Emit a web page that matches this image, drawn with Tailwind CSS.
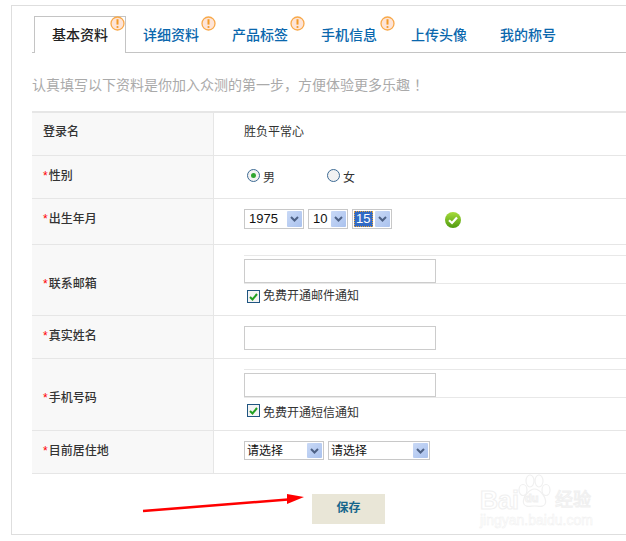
<!DOCTYPE html>
<html lang="zh-CN">
<head>
    <meta charset="UTF-8">
    <title>基本资料</title>
    <script src="https://cdn.jsdelivr.net/npm/@tailwindcss/browser@4"></script>
</head>
<body class="bg-white overflow-hidden font-['Liberation_Sans','Noto_Sans_CJK_SC',sans-serif] text-[12px] text-[#333]">
<div class="relative w-[626px] h-[541px] overflow-hidden">
    <!-- 外框 -->
    <div class="relative ml-[11px] mt-[5px] w-[640px] h-[530px] border border-[#dedede] border-r-0 pl-[20px] pt-[10px]">

        <!-- 标签 -->
        <div class="flex h-[37px] border-b border-[#c4c4c4] text-[14px] font-medium text-[#0a67ad] leading-[38px]">
            <div class="relative ml-[2px] w-[92px] h-[37px] border border-b-0 border-[#c4c4c4] bg-white pl-[17px] text-[#222] leading-[36px]">基本资料
                <svg class="absolute left-[75px] top-[-1px] w-[15px] h-[15px]" viewBox="0 0 15 15"><circle cx="7.5" cy="7.5" r="6.5" fill="#fde4d8" stroke="#f8a94a" stroke-width="1.3"/><path d="M7.5 3.2v5.4" stroke="#f39a26" stroke-width="2"/><circle cx="7.5" cy="11" r="1.1" fill="#f39a26"/></svg>
            </div>
            <div class="relative ml-[17px] w-[72px]">详细资料
                <svg class="absolute left-[58px] top-0 w-[15px] h-[15px]" viewBox="0 0 15 15"><circle cx="7.5" cy="7.5" r="6.5" fill="#fde4d8" stroke="#f8a94a" stroke-width="1.3"/><path d="M7.5 3.2v5.4" stroke="#f39a26" stroke-width="2"/><circle cx="7.5" cy="11" r="1.1" fill="#f39a26"/></svg>
            </div>
            <div class="relative ml-[17px] w-[72px]">产品标签
                <svg class="absolute left-[58px] top-0 w-[15px] h-[15px]" viewBox="0 0 15 15"><circle cx="7.5" cy="7.5" r="6.5" fill="#fde4d8" stroke="#f8a94a" stroke-width="1.3"/><path d="M7.5 3.2v5.4" stroke="#f39a26" stroke-width="2"/><circle cx="7.5" cy="11" r="1.1" fill="#f39a26"/></svg>
            </div>
            <div class="relative ml-[17px] w-[72px]">手机信息
                <svg class="absolute left-[59px] top-0 w-[15px] h-[15px]" viewBox="0 0 15 15"><circle cx="7.5" cy="7.5" r="6.5" fill="#fde4d8" stroke="#f8a94a" stroke-width="1.3"/><path d="M7.5 3.2v5.4" stroke="#f39a26" stroke-width="2"/><circle cx="7.5" cy="11" r="1.1" fill="#f39a26"/></svg>
            </div>
            <div class="ml-[18px] w-[72px]">上传头像</div>
            <div class="ml-[17px] w-[72px]">我的称号</div>
        </div>

        <p class="mt-[22px] h-[20px] text-[14px] leading-[20px] text-[#aaaaaa]">认真填写以下资料是你加入众测的第一步，方便体验更多乐趣<span class="ml-[4px]">！</span></p>

        <!-- 表单 -->
        <div class="mt-[16px] border-t-2 border-[#e6e6e6]">
            <div class="flex h-[43px] border-b border-[#e6e6e6]">
                <div class="w-[182px] border-r border-[#e6e6e6] bg-[#f8f8f8] pl-[11px] font-medium leading-[38px]">登录名</div>
                <div class="pl-[30px] leading-[38px]">胜负平常心</div>
            </div>
            <div class="flex h-[43px] border-b border-[#e6e6e6]">
                <div class="w-[182px] border-r border-[#e6e6e6] bg-[#f8f8f8] pl-[11px] font-medium leading-[40px]"><span class="text-[#f00] mr-px">*</span>性别</div>
                <div class="flex items-start pl-[33px] pt-[13px] leading-[14px]">
                    <span class="flex items-center justify-center w-[13px] h-[13px] rounded-full border border-[#3d6a94] bg-[#f2f2f2]"><span class="w-[5px] h-[5px] rounded-full bg-[#2fa52f]"></span></span>
                    <span class="ml-[3px] mt-[2px] w-[64px]">男</span>
                    <span class="w-[13px] h-[13px] rounded-full border border-[#3d6a94] bg-[#f2f2f2]"></span>
                    <span class="ml-[3px] mt-[2px]">女</span>
                </div>
            </div>
            <div class="flex h-[46px] border-b border-[#e6e6e6]">
                <div class="w-[182px] border-r border-[#e6e6e6] bg-[#f8f8f8] pl-[11px] font-medium leading-[40px]"><span class="text-[#f00] mr-px">*</span>出生年月</div>
                <div class="flex items-start pl-[30px] pt-[10px]">
                    <div class="flex justify-between w-[60px] h-[20px] border border-[#c8c8c8] p-px pl-[4px] text-[13px] leading-[16px] text-[#111]">1975
                        <span class="flex items-center justify-center w-[15px] h-[16px] rounded-[1px] bg-gradient-to-br from-[#c9d9f6] to-[#aac2ee]"><svg class="w-[9px] h-[6px]" viewBox="0 0 9 6"><path d="M1 1l3.5 3.5L8 1" fill="none" stroke="#4d6185" stroke-width="2"/></svg></span>
                    </div>
                    <div class="ml-[4px] flex justify-between w-[40px] h-[20px] border border-[#c8c8c8] p-px pl-[4px] text-[13px] leading-[16px] text-[#111]">10
                        <span class="flex items-center justify-center w-[15px] h-[16px] rounded-[1px] bg-gradient-to-br from-[#c9d9f6] to-[#aac2ee]"><svg class="w-[9px] h-[6px]" viewBox="0 0 9 6"><path d="M1 1l3.5 3.5L8 1" fill="none" stroke="#4d6185" stroke-width="2"/></svg></span>
                    </div>
                    <div class="ml-[4px] flex justify-between w-[40px] h-[20px] border border-[#c8c8c8] p-px pl-[1px] text-[13px] leading-[16px] text-white">
                        <span class="w-[19px] h-[16px] bg-[#316ac5] border border-dotted border-[#e8a33a] pl-px leading-[14px]">15</span>
                        <span class="flex items-center justify-center w-[15px] h-[16px] rounded-[1px] bg-gradient-to-br from-[#c9d9f6] to-[#aac2ee]"><svg class="w-[9px] h-[6px]" viewBox="0 0 9 6"><path d="M1 1l3.5 3.5L8 1" fill="none" stroke="#4d6185" stroke-width="2"/></svg></span>
                    </div>
                    <svg class="ml-[53px] mt-[3px] w-[16px] h-[16px]" viewBox="0 0 16 16"><defs><linearGradient id="g" x1="0" y1="0" x2="0" y2="1"><stop offset="0" stop-color="#a6dc3a"/><stop offset="1" stop-color="#4f9a10"/></linearGradient></defs><circle cx="8" cy="8" r="8" fill="url(#g)"/><path d="M4 8.2l3 2.8 5-5.6" fill="none" stroke="#fff" stroke-width="2.2"/></svg>
                </div>
            </div>
            <div class="flex h-[71px] border-b border-[#e6e6e6]">
                <div class="w-[182px] border-r border-[#e6e6e6] bg-[#f8f8f8] pl-[11px] font-medium leading-[78px]"><span class="text-[#f00] mr-px">*</span>联系邮箱</div>
                <div class="flex-1 pl-[30px]">
                    <div class="mt-[10px] border-t border-[#e8e8e8] pt-[3px]">
                        <div class="w-[192px] h-[24px] border border-[#cccccc]"></div>
                        <div class="border-t border-[#e8e8e8] flex items-start pl-[3px] pt-[6px] leading-[13px]">
                            <span class="flex items-center justify-center w-[13px] h-[13px] border border-[#1f5581] bg-[#f4f4f4]"><svg class="w-[9px] h-[8px]" viewBox="0 0 9 8"><path d="M1 4l2.5 2.5L8 1" fill="none" stroke="#20a020" stroke-width="2"/></svg></span>
                            <span class="ml-[3px]">免费开通邮件通知</span>
                        </div>
                    </div>
                </div>
            </div>
            <div class="flex h-[43px] border-b border-[#e6e6e6]">
                <div class="w-[182px] border-r border-[#e6e6e6] bg-[#f8f8f8] pl-[11px] font-medium leading-[40px]"><span class="text-[#f00] mr-px">*</span>真实姓名</div>
                <div class="pl-[30px] pt-[10px]"><div class="w-[192px] h-[24px] border border-[#cccccc]"></div></div>
            </div>
            <div class="flex h-[72px] border-b border-[#e6e6e6]">
                <div class="w-[182px] border-r border-[#e6e6e6] bg-[#f8f8f8] pl-[11px] font-medium leading-[78px]"><span class="text-[#f00] mr-px">*</span>手机号码</div>
                <div class="flex-1 pl-[30px]">
                    <div class="mt-[10px] border-t border-[#e8e8e8] pt-[3px]">
                        <div class="w-[192px] h-[24px] border border-[#cccccc]"></div>
                        <div class="border-t border-[#e8e8e8] flex items-start pl-[3px] pt-[6px] leading-[13px]">
                            <span class="flex items-center justify-center w-[13px] h-[13px] border border-[#1f5581] bg-[#f4f4f4]"><svg class="w-[9px] h-[8px]" viewBox="0 0 9 8"><path d="M1 4l2.5 2.5L8 1" fill="none" stroke="#20a020" stroke-width="2"/></svg></span>
                            <span class="ml-[3px] mt-[3px]">免费开通短信通知</span>
                        </div>
                    </div>
                </div>
            </div>
            <div class="flex h-[43px] border-b border-[#e6e6e6]">
                <div class="w-[182px] border-r border-[#e6e6e6] bg-[#f8f8f8] pl-[11px] font-medium leading-[40px]"><span class="text-[#f00] mr-px">*</span>目前居住地</div>
                <div class="flex items-start gap-[4px] pl-[30px] pt-[10px]">
                    <div class="flex justify-between w-[80px] h-[19px] border border-[#c8c8c8] p-px pl-[2px] leading-[17px] text-[#111]">请选择
                        <span class="flex items-center justify-center w-[15px] h-[15px] rounded-[1px] bg-gradient-to-br from-[#c9d9f6] to-[#aac2ee]"><svg class="w-[9px] h-[6px]" viewBox="0 0 9 6"><path d="M1 1l3.5 3.5L8 1" fill="none" stroke="#4d6185" stroke-width="2"/></svg></span>
                    </div>
                    <div class="flex justify-between w-[102px] h-[19px] border border-[#c8c8c8] p-px pl-[2px] leading-[17px] text-[#111]">请选择
                        <span class="flex items-center justify-center w-[15px] h-[15px] rounded-[1px] bg-gradient-to-br from-[#c9d9f6] to-[#aac2ee]"><svg class="w-[9px] h-[6px]" viewBox="0 0 9 6"><path d="M1 1l3.5 3.5L8 1" fill="none" stroke="#4d6185" stroke-width="2"/></svg></span>
                    </div>
                </div>
            </div>
        </div>

        <div class="ml-[280px] mt-[20px] w-[73px] h-[30px] bg-[#e9e6d7] text-center text-[12px] font-bold leading-[28px] text-[#17668c]">保存</div>
    </div>

    <!-- 标注箭头 -->
    <svg class="absolute left-[140px] top-[488px] w-[170px] h-[28px]" viewBox="0 0 170 28"><path d="M3 23L148 11.5" stroke="#ff0000" stroke-width="2.6"/><path d="M147 6l17 3-17 7z" fill="#ff0000"/></svg>

    <!-- 水印 -->
    <div class="absolute left-[480px] top-[474px] w-[112px] h-[52px] text-white [-webkit-text-stroke:1px_#f0f0f0]">
        <svg class="absolute left-[38px] top-0 w-[33px] h-[36px]" viewBox="0 0 33 36" fill="white" stroke="#f0f0f0" stroke-width="1.2"><ellipse cx="5" cy="16" rx="4" ry="5.5"/><ellipse cx="12" cy="7" rx="4" ry="6"/><ellipse cx="21" cy="7" rx="4" ry="6"/><ellipse cx="28" cy="16" rx="4" ry="5.5"/><path d="M16.5 15c5 0 12 8 11 14-1 5-7 3-11 3s-10 2-11-3c-1-6 6-14 11-14z"/></svg>
        <span class="absolute left-0 top-[11px] text-[25px] leading-[30px] font-bold">Bai</span>
        <span class="absolute left-[45px] top-[17px] text-[11px] leading-[14px] font-bold">du</span>
        <span class="absolute left-[75px] top-[16px] text-[18px] leading-[20px]">经验</span>
        <span class="absolute left-0 top-[38px] text-[14px] leading-[16px] whitespace-nowrap [-webkit-text-stroke:0.5px_#f0f0f0]">jingyan.baidu.com</span>
    </div>
</div>
</body>
</html>
